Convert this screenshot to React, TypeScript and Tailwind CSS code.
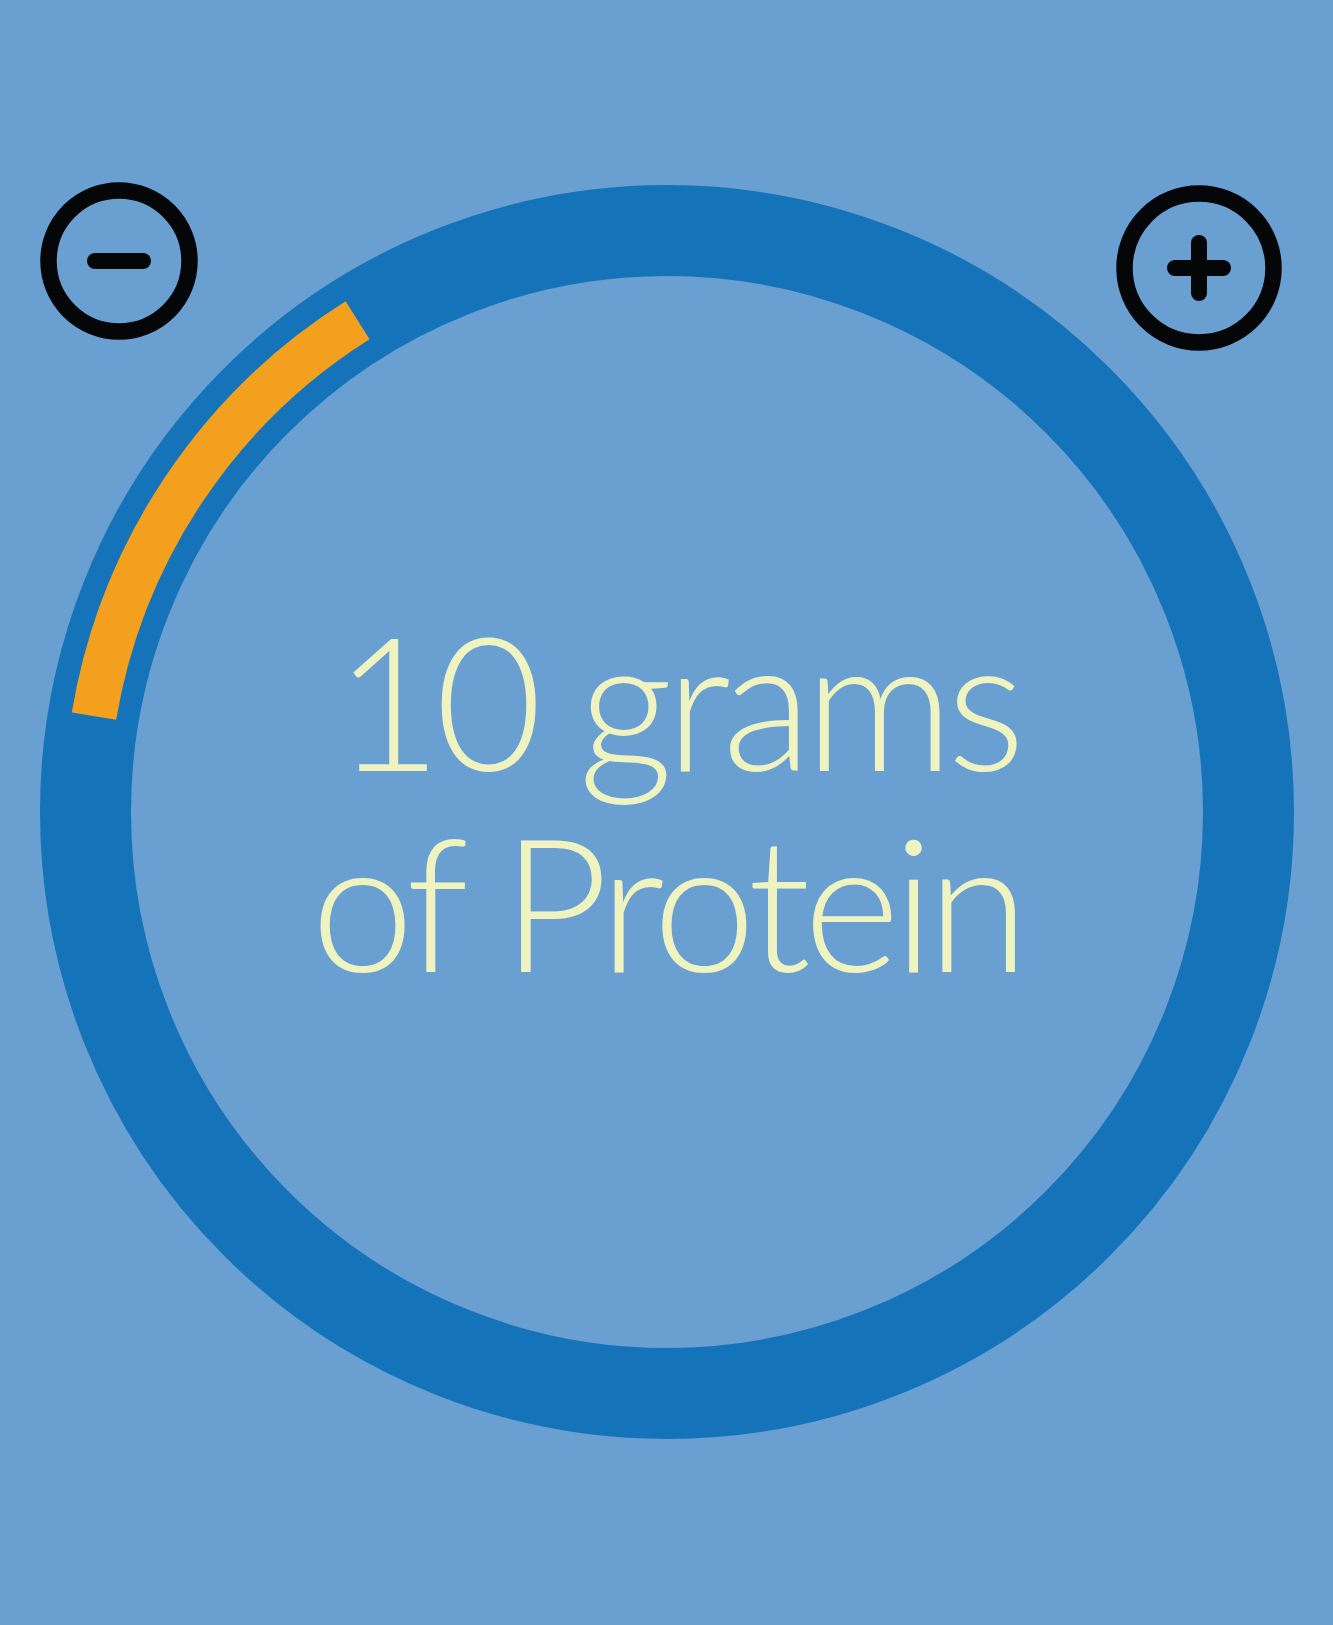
import React, { useState } from 'react';

const RING = 1254;
const C = RING / 2;

// point on circle, angle in degrees measured clockwise from 12 o'clock
const polar = (r: number, deg: number) => {
  const a = (deg * Math.PI) / 180;
  return [C + r * Math.sin(a), C - r * Math.cos(a)];
};

function ProgressRing({ grams, goal }: { grams: number; goal: number }) {
  const start = -80.5;
  const end = start + (grams / goal) * 360;
  const r = 581;
  const [x1, y1] = polar(r, start);
  const [x2, y2] = polar(r, end);
  const large = end - start > 180 ? 1 : 0;

  return (
    <svg width={RING} height={RING} viewBox={`0 0 ${RING} ${RING}`} className="block">
      <circle cx={C} cy={C} r={581.5} fill="none" stroke="#1573ba" strokeWidth={91} />
      <path
        d={`M ${x1} ${y1} A ${r} ${r} 0 ${large} 1 ${x2} ${y2}`}
        fill="none"
        stroke="#f3a01e"
        strokeWidth={45}
      />
    </svg>
  );
}

function RoundButton({ kind, size, onClick }: { kind: 'minus' | 'plus'; size: number; onClick: () => void }) {
  const h = size / 2;
  return (
    <button onClick={onClick} className="block cursor-pointer" aria-label={kind}>
      <svg width={size} height={size} viewBox={`0 0 ${size} ${size}`}>
        <circle cx={h} cy={h} r={h - 8.5} fill="none" stroke="#050608" strokeWidth={16.5} />
        <line x1={h - 24} y1={h} x2={h + 24} y2={h} stroke="#050608" strokeWidth={16} strokeLinecap="round" />
        {kind === 'plus' && (
          <line x1={h} y1={h - 25} x2={h} y2={h + 25} stroke="#050608" strokeWidth={16} strokeLinecap="round" />
        )}
      </svg>
    </button>
  );
}

export default function App() {
  const [grams, setGrams] = useState(10);

  return (
    <div className="relative w-full h-[1625px] bg-[#6a9fd1] overflow-hidden flex justify-center pt-[185px]">
      {/* Controls */}
      <div className="absolute left-[40px] top-[182px]">
        <RoundButton kind="minus" size={158} onClick={() => setGrams(Math.max(0, grams - 1))} />
      </div>
      <div className="absolute left-[1116px] top-[185px]">
        <RoundButton kind="plus" size={166} onClick={() => setGrams(grams + 1)} />
      </div>

      {/* Ring */}
      <div className="relative w-[1254px] h-[1254px]">
        <ProgressRing grams={grams} goal={74.5} />
        <div className="absolute inset-0 flex items-center justify-center pb-[24px]">
          <div
            className="text-center text-[#eff3c0] text-[185px] leading-[201px] font-light tracking-[-7px]"
            style={{ fontFamily: 'Lato, "Liberation Sans", sans-serif' }}
          >
            <div className="pl-[20px]">{grams} grams</div>
            <div>of Protein</div>
          </div>
        </div>
      </div>
    </div>
  );
}
